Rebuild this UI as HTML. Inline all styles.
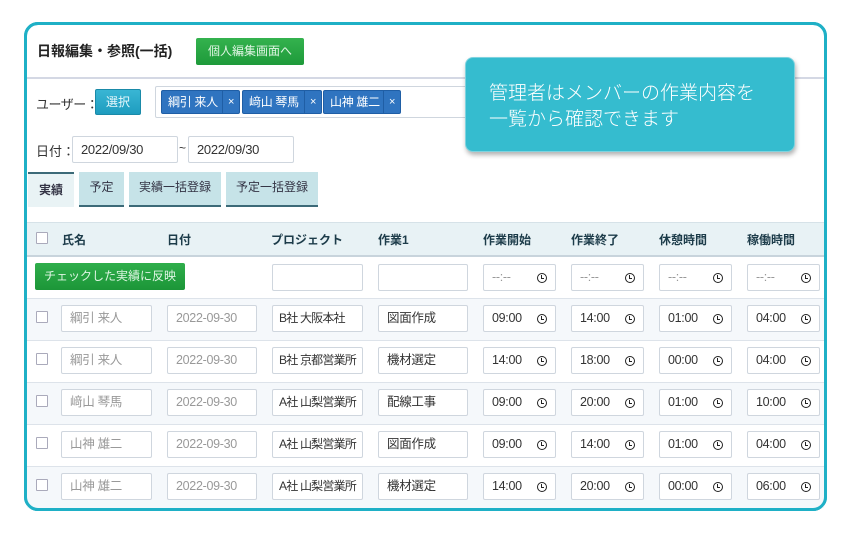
<!DOCTYPE html>
<html><head><meta charset="utf-8"><style>
*{box-sizing:border-box;margin:0;padding:0;white-space:nowrap}
body{width:850px;height:533px;background:#fff;position:relative;overflow:hidden;font-family:"Liberation Sans","Noto Sans CJK JP",sans-serif;color:#333}
.a{position:absolute}
.frame{left:24px;top:22px;width:803px;height:489px;border:3px solid #1fb0c6;border-radius:14px;overflow:hidden;background:#fff}
.inp{position:absolute;height:27px;border:1px solid #cfd6de;background:#fff;border-radius:2px;font-size:12.5px;line-height:25px;padding-left:8px;color:#333;overflow:hidden;letter-spacing:-0.3px}
.g{color:#999}
.cb{position:absolute;width:12px;height:12px;border:1px solid #aab;background:#fff;border-radius:1px}
.th{position:absolute;font-size:12px;font-weight:bold;color:#1d3c4a;top:231px}
.tab{position:absolute;top:172px;height:35px;background:#c6e3e8;border-bottom:2px solid #3c6a78;font-size:12px;color:#334;text-align:center;line-height:30px}
.clk{position:absolute;right:8px;top:8px;width:10px;height:10px;border:1.6px solid #222;border-radius:50%}
.clk:after{content:"";position:absolute;left:3px;top:1px;width:2px;height:3px;border-left:1.3px solid #222;border-bottom:1.3px solid #222}
.tag{position:absolute;top:90px;height:24px;background:#2f74c0;border:1px solid #1f5ea5;border-radius:2px;color:#fff;font-size:12px;line-height:22px;padding-left:6px;letter-spacing:-0.3px}
.tag span{position:absolute;right:0;top:0;width:17px;height:22px;border-left:1px solid #1f5ea5;text-align:center;font-size:11px}
</style></head><body>
<div class="a frame"></div>
<div class="a" style="left:37px;top:41px;font-size:14px;font-weight:bold;color:#222">日報編集・参照(一括)</div>
<div class="a" style="left:196px;top:38px;width:108px;height:27px;background:linear-gradient(#34b24e,#1e9a3a);border-radius:2px;color:#dff5e3;font-size:12px;text-align:center;line-height:27px">個人編集画面へ</div>
<div class="a" style="left:27px;top:77px;width:797px;height:2px;background:#d4d8e4"></div>
<div class="a" style="left:36px;top:94px;font-size:13px;color:#333;letter-spacing:-0.5px">ユーザー：</div>
<div class="a" style="left:95px;top:89px;width:46px;height:26px;background:linear-gradient(#39b6d4,#1e9cbf);border:1px solid #1a8aa8;border-radius:2px;color:#e8f8fc;font-size:12px;text-align:center;line-height:24px">選択</div>
<div class="a" style="left:155px;top:86px;width:400px;height:32px;border:1px solid #cfd6de;border-radius:2px;background:#fff"></div>
<div class="tag" style="left:161px;width:79px">綱引 来人<span>×</span></div>
<div class="tag" style="left:242px;width:80px">﨑山 琴馬<span>×</span></div>
<div class="tag" style="left:323px;width:78px">山神 雄二<span>×</span></div>
<div class="a" style="left:36px;top:141px;font-size:13px">日付：</div>
<div class="inp" style="left:72px;top:136px;width:106px;font-size:13px">2022/09/30</div>
<div class="a" style="left:179px;top:141px;font-size:12px">~</div>
<div class="inp" style="left:188px;top:136px;width:106px;font-size:13px">2022/09/30</div>
<div class="tab" style="left:28px;width:46px;background:#e9f3f5;border-top:2px solid #3c6a78;border-bottom:none;font-weight:bold;line-height:33px">実績</div>
<div class="tab" style="left:79px;width:45px">予定</div>
<div class="tab" style="left:129px;width:92px">実績一括登録</div>
<div class="tab" style="left:226px;width:92px">予定一括登録</div>
<div class="a" style="left:27px;top:222px;width:797px;height:35px;background:#e8f2f5;border-top:1px solid #d6e2e8;border-bottom:2px solid #c8d4dc"></div>
<div class="cb" style="left:36px;top:232px"></div>
<div class="th" style="left:62px">氏名</div>
<div class="th" style="left:167px">日付</div>
<div class="th" style="left:271px">プロジェクト</div>
<div class="th" style="left:378px">作業1</div>
<div class="th" style="left:483px">作業開始</div>
<div class="th" style="left:571px">作業終了</div>
<div class="th" style="left:659px">休憩時間</div>
<div class="th" style="left:747px">稼働時間</div>
<div class="a" style="left:35px;top:263px;width:150px;height:27px;background:linear-gradient(#2fae4b,#1c9638);border-radius:2px;color:#dff5e3;font-size:12px;text-align:center;line-height:27px">チェックした実績に反映</div>
<div class="inp" style="left:272px;top:264px;width:91px"></div>
<div class="inp" style="left:378px;top:264px;width:90px"></div>
<div class="inp g" style="left:483px;top:264px;width:73px">--:--<i class="clk"></i></div>
<div class="inp g" style="left:571px;top:264px;width:73px">--:--<i class="clk"></i></div>
<div class="inp g" style="left:659px;top:264px;width:73px">--:--<i class="clk"></i></div>
<div class="inp g" style="left:747px;top:264px;width:73px">--:--<i class="clk"></i></div>
<div id="rows"></div>
<script>
var d=[["綱引 来人","B社 大阪本社","図面作成","09:00","14:00","01:00","04:00"],["綱引 来人","B社 京都営業所","機材選定","14:00","18:00","00:00","04:00"],["﨑山 琴馬","A社 山梨営業所","配線工事","09:00","20:00","01:00","10:00"],["山神 雄二","A社 山梨営業所","図面作成","09:00","14:00","01:00","04:00"],["山神 雄二","A社 山梨営業所","機材選定","14:00","20:00","00:00","06:00"]];
var h="";d.forEach(function(r,i){var y=298+i*42;
h+='<div class="a" style="left:27px;top:'+y+'px;width:797px;height:42px;background:'+(i%2==0?'#f5f8fb':'#fff')+';border-top:1px solid #dde3ea"></div>';
var t=y+7;
h+='<div class="cb" style="left:36px;top:'+(y+13)+'px"></div>';
h+='<div class="inp g" style="left:61px;top:'+t+'px;width:91px">'+r[0]+'</div>';
h+='<div class="inp g" style="left:167px;top:'+t+'px;width:90px">2022-09-30</div>';
h+='<div class="inp" style="left:272px;top:'+t+'px;width:91px;padding-left:6px;font-size:12px;letter-spacing:-0.8px">'+r[1]+'</div>';
h+='<div class="inp" style="left:378px;top:'+t+'px;width:90px">'+r[2]+'</div>';
[483,571,659,747].forEach(function(x,k){h+='<div class="inp" style="left:'+x+'px;top:'+t+'px;width:73px">'+r[3+k]+'<i class="clk"></i></div>';});});
document.getElementById("rows").innerHTML=h;
</script>
<div class="a" style="left:24px;top:22px;width:803px;height:489px;border:3px solid #1fb0c6;border-radius:14px"></div>
<div class="a" style="left:465px;top:57px;width:330px;height:95px;background:#35bccf;border:1px solid #7fd3df;border-radius:8px;box-shadow:1px 3px 5px rgba(0,0,0,.3);color:#fff;font-size:19px;line-height:26px;padding:21px 0 0 23px;font-family:'Noto Sans CJK JP',sans-serif;font-weight:300">管理者はメンバーの作業内容を<br>一覧から確認できます</div>
</body></html>
